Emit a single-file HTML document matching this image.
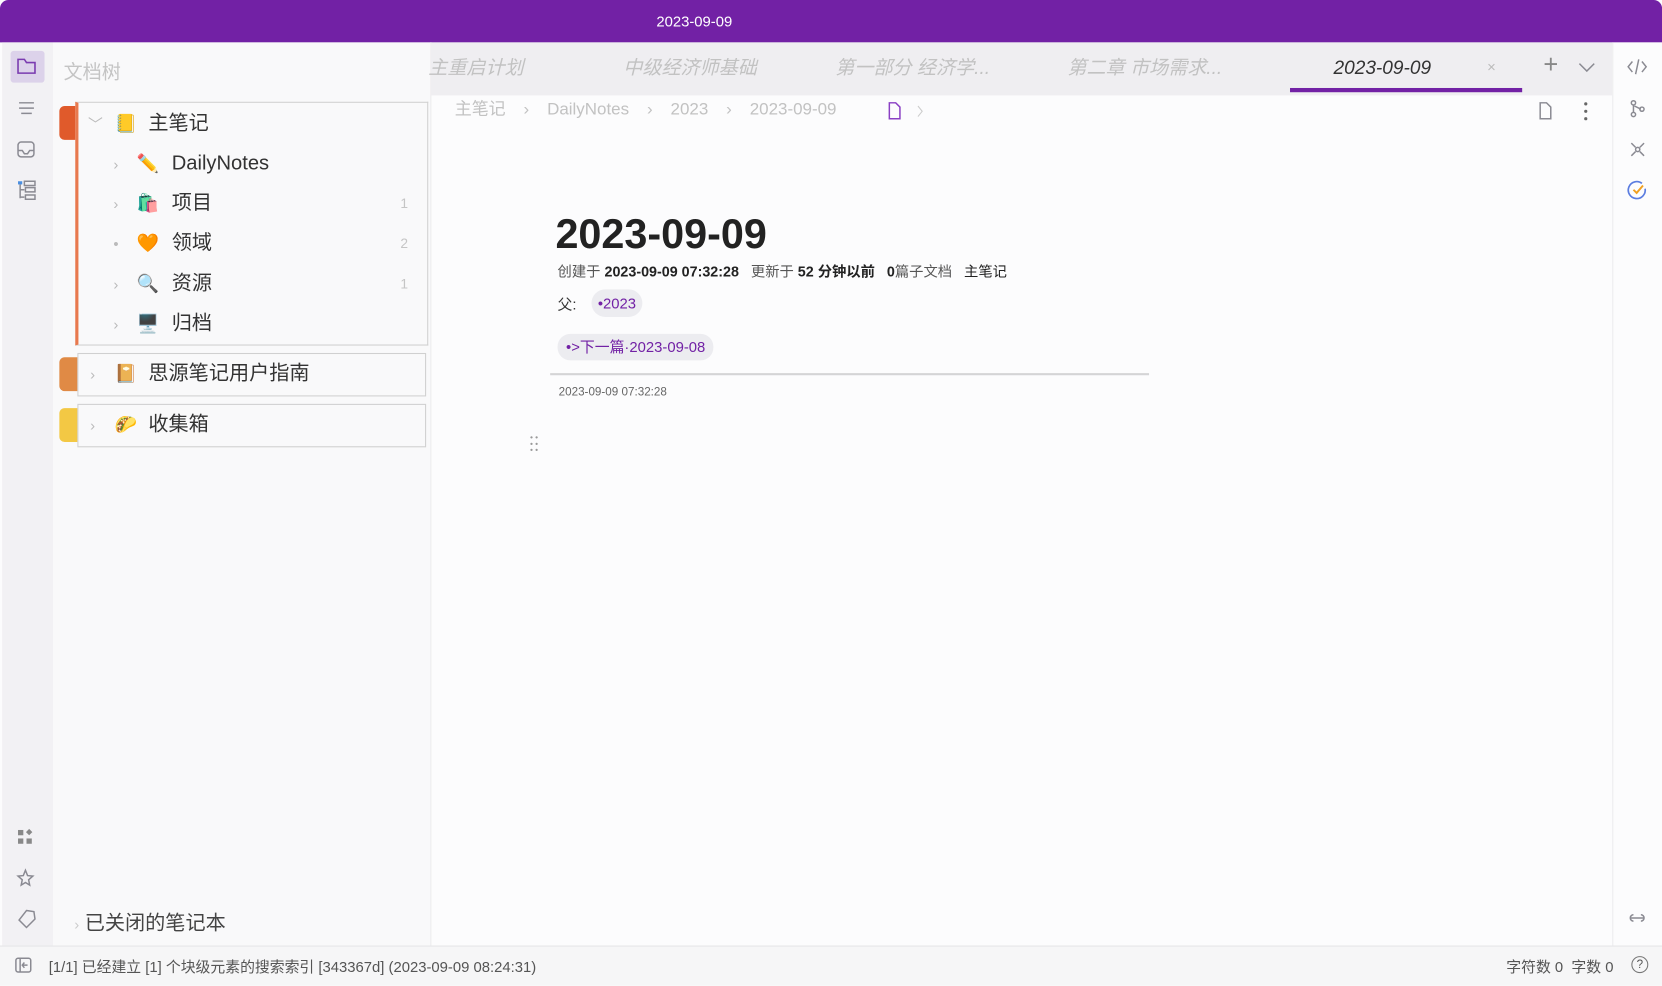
<!DOCTYPE html>
<html><head><meta charset="utf-8"><style>
html,body{margin:0;padding:0;width:1662px;height:986px;overflow:hidden;background:#fff}
#w{position:absolute;left:0;top:0;width:1568px;height:930px;transform:scale(1.06);transform-origin:0 0;font-family:"Liberation Sans","Noto Sans CJK SC",sans-serif;background:#fcfcfd;overflow:hidden}
.a{position:absolute;white-space:nowrap}
.tb{left:0;top:0;width:1568px;height:40px;background:#7221a5;border-radius:8px 8px 0 0}
.ic{stroke:#8a8a92;fill:none;stroke-width:1.4}
.row{position:absolute;left:75px;height:38px;width:324px;font-size:19px;color:#333;line-height:38px}
.row .t{position:absolute;top:0;line-height:38px}
.row .e{position:absolute;top:0;line-height:38px;font-size:17px}
.row .chev{position:absolute;top:0;color:#bbb;font-size:14px;line-height:38px}
.row .n{position:absolute;right:14px;top:0;color:#c5c5c5;font-size:13px;line-height:38px}
.box{position:absolute;left:73px;width:327px;border:1px solid #d0d0d0;background:#f9f9fa}
.tag{position:absolute;left:56px;width:20px;border-radius:5px 0 0 5px}
.tab{position:absolute;top:53px;font-size:18px;font-style:italic;color:#c2c2c2;line-height:22px}
</style></head><body><div id="w">
<div class="a tb"></div>
<div class="a" style="left:0;top:12px;width:1310px;text-align:center;color:#fff;font-size:14px">2023-09-09</div>
<div class="a" style="left:2px;top:40px;width:48px;height:852px;background:#f2f1f4"></div>
<div class="a" style="left:10px;top:48px;width:32px;height:30px;background:#dcd2ea;border-radius:3px"></div>
<svg class="a" style="left:0;top:40px" width="50" height="852">
<path d="M17 16h6l2 3h8v10h-16z" stroke="#7a3bb0" fill="none" stroke-width="1.5"/>
<path d="M18 57h14M18 62h14M20 67h10" class="ic"/>
<rect x="17" y="94" width="15" height="14" rx="3" class="ic"/><path d="M17 102h4l2 3h3l2-3h4" class="ic"/>
<rect x="17" y="131" width="4" height="3" fill="#4a8ee0"/><path d="M19 134v13M19 139h4M19 146h4M23 131h10v4h-10zM24 137h9v4h-9zM24 144h9v4h-9z" class="ic"/>
<rect x="17" y="743" width="5" height="5" fill="#888"/><rect x="17" y="751" width="5" height="5" fill="#888"/><rect x="25" y="751" width="5" height="5" fill="#888"/><path d="M27.5 742l3 3-3 3-3-3z" fill="#888"/>
<path d="M24 781l2 5 5 .5-4 3.5 1 5-4-2.5-4 2.5 1-5-4-3.5 5-.5z" class="ic"/>
<path d="M25 819l7 1 1 7-8 8-7-7z" class="ic"/>
</svg>
<div class="a" style="left:50px;top:40px;width:356px;height:852px;background:#f9f9fa;border-right:1px solid #ececee"></div>
<div class="a" style="left:60px;top:54px;font-size:18px;color:#c4c4c4">文档树</div>
<div class="tag" style="top:100px;height:32px;background:#e05a2b"></div>
<div class="box" style="top:96px;height:228px;border-left:3px solid #e8794e;left:71px;width:329px"></div>
<div class="row" style="top:98px"><span class="chev" style="left:8px">﹀</span><span class="e" style="left:33px">📒</span><span class="t" style="left:65px">主笔记</span></div>
<div class="row" style="top:136px"><span class="chev" style="left:32px">›</span><span class="e" style="left:54px">✏️</span><span class="t" style="left:87px">DailyNotes</span></div>
<div class="row" style="top:173px"><span class="chev" style="left:32px">›</span><span class="e" style="left:54px">🛍️</span><span class="t" style="left:87px">项目</span><span class="n">1</span></div>
<div class="row" style="top:211px"><span class="chev" style="left:32px">•</span><span class="e" style="left:54px">🧡</span><span class="t" style="left:87px">领域</span><span class="n">2</span></div>
<div class="row" style="top:249px"><span class="chev" style="left:32px">›</span><span class="e" style="left:54px">🔍</span><span class="t" style="left:87px">资源</span><span class="n">1</span></div>
<div class="row" style="top:287px"><span class="chev" style="left:32px">›</span><span class="e" style="left:54px">🖥️</span><span class="t" style="left:87px">归档</span></div>
<div class="tag" style="top:337px;height:32px;background:#e08a45"></div>
<div class="box" style="top:333px;height:39px"></div>
<div class="row" style="top:334px"><span class="chev" style="left:10px">›</span><span class="e" style="left:33px">📔</span><span class="t" style="left:65px">思源笔记用户指南</span></div>
<div class="tag" style="top:385px;height:32px;background:#f3c844"></div>
<div class="box" style="top:381px;height:39px"></div>
<div class="row" style="top:382px"><span class="chev" style="left:10px">›</span><span class="e" style="left:33px">🌮</span><span class="t" style="left:65px">收集箱</span></div>
<div class="a" style="left:70px;top:860px;font-size:19px;color:#444;line-height:24px"><span style="color:#ccc;font-size:14px">›</span> 已关闭的笔记本</div>
<div class="a" style="left:406px;top:40px;width:1115px;height:50px;background:#efeef1"></div>
<div class="tab" style="left:404px">主重启计划</div>
<div class="tab" style="left:588px">中级经济师基础</div>
<div class="tab" style="left:788px">第一部分 经济学...</div>
<div class="tab" style="left:1007px">第二章 市场需求...</div>
<div class="tab" style="left:1258px;color:#333">2023-09-09</div>
<div class="a" style="left:1403px;top:55px;color:#bbb;font-size:14px">×</div>
<div class="a" style="left:1217px;top:83px;width:219px;height:4px;background:#7221a5"></div>
<div class="a" style="left:1456px;top:48px;font-size:24px;color:#888">+</div>
<svg class="a" style="left:1487px;top:57px" width="20" height="14"><path d="M3 3l7 7 7-7" class="ic"/></svg>
<div class="a" style="left:429px;top:93px;font-size:16px;color:#c2c2c2;word-spacing:4px;line-height:22px">主笔记 &nbsp;›&nbsp; DailyNotes &nbsp;›&nbsp; 2023 &nbsp;›&nbsp; 2023-09-09</div>
<svg class="a" style="left:836px;top:95px" width="40" height="20"><path d="M3 2h6l4 4v11h-10z" stroke="#8a3fc4" fill="none" stroke-width="1.4"/><path d="M30 5l4 5-4 5" stroke="#ccc" fill="none"/></svg>
<svg class="a" style="left:1450px;top:95px" width="60" height="20"><path d="M3 2h6l4 4v11h-10z" class="ic"/><circle cx="46" cy="3" r="1.5" fill="#666"/><circle cx="46" cy="10" r="1.5" fill="#666"/><circle cx="46" cy="17" r="1.5" fill="#666"/></svg>
<div class="a" style="left:524px;top:199px;font-size:39px;font-weight:bold;color:#222;line-height:46px">2023-09-09</div>
<div class="a" style="left:526px;top:248px;font-size:13.5px;color:#555;line-height:18px">创建于 <b style="color:#222">2023-09-09 07:32:28</b> &nbsp; 更新于 <b style="color:#222">52 分钟以前</b> &nbsp; <b style="color:#222">0</b>篇子文档 &nbsp; <span style="color:#222">主笔记</span></div>
<div class="a" style="left:526px;top:277px;font-size:14px;color:#333">父:</div>
<div class="a" style="left:558px;top:273px;height:26px;padding:0 6px;background:#ececf0;border-radius:13px;font-size:14px;line-height:26px;color:#7221a5">•2023</div>
<div class="a" style="left:526px;top:315px;height:25px;padding:0 8px;background:#ececf0;border-radius:12px;font-size:14px;line-height:25px;color:#7221a5">•>下一篇·2023-09-08</div>
<div class="a" style="left:519px;top:352px;width:565px;height:2px;background:#d4d4d6"></div>
<div class="a" style="left:527px;top:364px;font-size:11px;color:#666">2023-09-09 07:32:28</div>
<div class="a" style="left:500px;top:410px;width:12px;font-size:8px;color:#999;line-height:6px;letter-spacing:2px">••<br>••<br>••</div>
<div class="a" style="left:1521px;top:40px;width:47px;height:852px;background:#fcfcfd;border-left:1px solid #ececee"></div>
<svg class="a" style="left:1521px;top:40px" width="47" height="852">
<path d="M19 18l-4 5 4 5M28 18l4 5-4 5M25 16l-3 14" class="ic"/>
<circle cx="20" cy="57" r="2" class="ic"/><circle cx="20" cy="68" r="2" class="ic"/><circle cx="28" cy="63" r="2" class="ic"/><path d="M20 59v7M21 60l6 3" class="ic"/>
<circle cx="24" cy="101" r="2" class="ic"/><path d="M18 95l4 4M30 95l-4 4M18 107l4-4M30 107l-4-4" class="ic"/>
<path d="M28 133a8 8 0 1 0 3 5" stroke="#5b7de0" fill="none" stroke-width="1.6"/><path d="M20 139l3 3 6-7" stroke="#f0a020" fill="none" stroke-width="1.8"/>
<path d="M17 826h13M20 823a3 3 0 0 0 0 6M27 823a3 3 0 0 1 0 6" class="ic"/>
</svg>
<div class="a" style="left:0;top:892px;width:1568px;height:38px;background:#f6f6f7;border-top:1px solid #e6e6e8"></div>
<svg class="a" style="left:14px;top:903px" width="18" height="16"><rect x="1" y="1" width="14" height="13" rx="2" class="ic"/><path d="M5 1v13M12 7.5h-5M9 5l-2 2.5 2 2.5" class="ic"/></svg>
<div class="a" style="left:46px;top:902px;font-size:14px;color:#555">[1/1] 已经建立 [1] 个块级元素的搜索索引 [343367d] (2023-09-09 08:24:31)</div>
<div class="a" style="left:1421px;top:902px;font-size:14px;color:#555">字符数 0 &nbsp;字数 0</div>
<div class="a" style="left:1539px;top:902px;width:14px;height:14px;border:1px solid #777;border-radius:50%;font-size:11px;text-align:center;line-height:14px;color:#555">?</div>
</div></body></html>
